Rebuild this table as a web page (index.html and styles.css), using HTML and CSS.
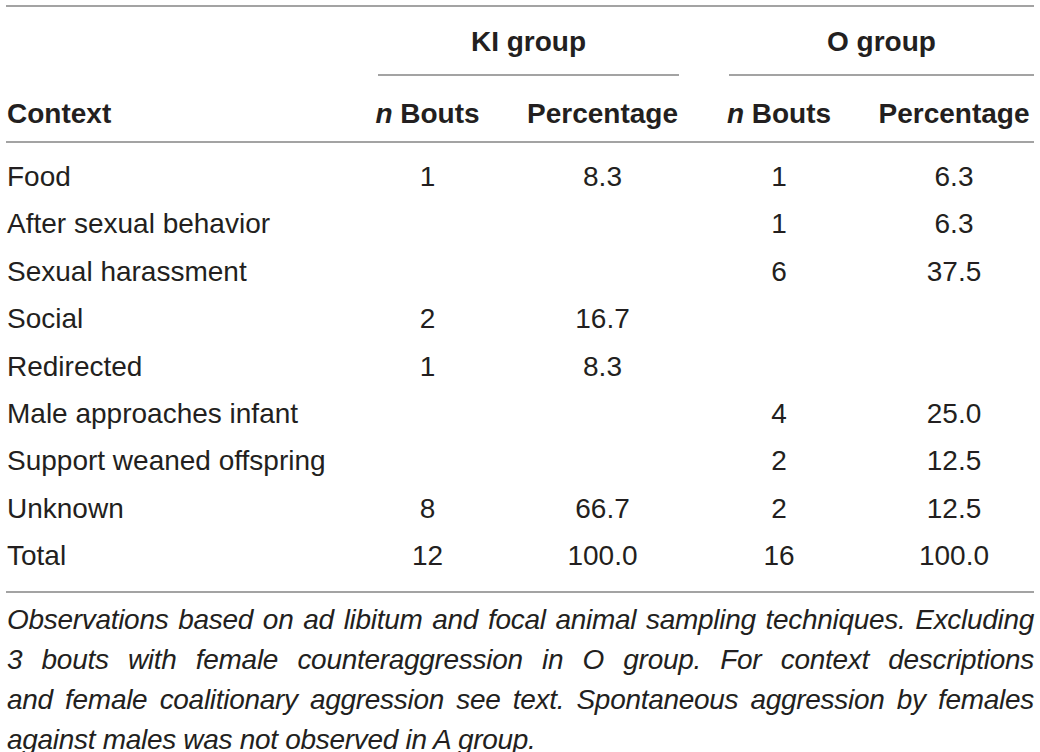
FILE: index.html
```html
<!DOCTYPE html>
<html>
<head>
<meta charset="utf-8">
<link rel="stylesheet" href="styles.css">
</head>
<body>
<div class="wrap">
<table class="data">
  <colgroup>
    <col class="c1"><col class="c2"><col class="c3"><col class="c4"><col class="c5">
  </colgroup>
  <thead>
    <tr class="grp">
      <th></th>
      <th colspan="2"><div class="gline ki">KI group</div></th>
      <th colspan="2"><div class="gline og">O group</div></th>
    </tr>
    <tr class="sub">
      <th class="ctx">Context</th>
      <th><i>n</i> Bouts</th>
      <th>Percentage</th>
      <th><i>n</i> Bouts</th>
      <th class="last">Percentage</th>
    </tr>
  </thead>
  <tbody>
    <tr class="first"><td>Food</td><td>1</td><td>8.3</td><td>1</td><td class="last">6.3</td></tr>
    <tr><td>After sexual behavior</td><td></td><td></td><td>1</td><td class="last">6.3</td></tr>
    <tr><td>Sexual harassment</td><td></td><td></td><td>6</td><td class="last">37.5</td></tr>
    <tr><td>Social</td><td>2</td><td>16.7</td><td></td><td class="last"></td></tr>
    <tr><td>Redirected</td><td>1</td><td>8.3</td><td></td><td class="last"></td></tr>
    <tr><td>Male approaches infant</td><td></td><td></td><td>4</td><td class="last">25.0</td></tr>
    <tr><td>Support weaned offspring</td><td></td><td></td><td>2</td><td class="last">12.5</td></tr>
    <tr><td>Unknown</td><td>8</td><td>66.7</td><td>2</td><td class="last">12.5</td></tr>
    <tr class="end"><td>Total</td><td>12</td><td>100.0</td><td>16</td><td class="last">100.0</td></tr>
  </tbody>
</table>
<div class="note">
  <span class="ln">Observations based on ad libitum and focal animal sampling techniques. Excluding</span>
  <span class="ln">3 bouts with female counteraggression in O group. For context descriptions</span>
  <span class="ln">and female coalitionary aggression see text. Spontaneous aggression by females</span>
  <span class="ln lastln">against males was not observed in A group.</span>
</div>
</div>
</body>
</html>
```

FILE: styles.css
```css
html, body {
  margin: 0;
  padding: 0;
  background: #ffffff;
}
body {
  font-family: "Liberation Sans", Arial, sans-serif;
  font-size: 28px;
  color: #231f20;
}
.wrap {
  padding: 5px 6px 0 6px;
  width: 1028px;
}
.data {
  width: 1028px;
  table-layout: fixed;
  border-collapse: separate;
  border-spacing: 0;
  border-top: 2px solid #a3a3a3;
}
.c1 { width: 334px; }
.c2 { width: 175px; }
.c3 { width: 175px; }
.c4 { width: 178px; }
.c5 { width: 166px; }

th, td {
  padding: 0;
  text-align: center;
  vertical-align: top;
}
th { font-weight: bold; }

.grp th {
  padding-top: 15px;
  line-height: 40px;
}
.gline {
  padding-bottom: 12px;
  border-bottom: 2px solid #a3a3a3;
}
.gline.ki { margin: 0 11px 0 38px; }
.gline.og { margin: 0 0 0 39px; }

.sub th {
  padding-top: 18px;
  padding-bottom: 7px;
  line-height: 40px;
  border-bottom: 2px solid #a3a3a3;
}
.sub th.ctx { text-align: left; padding-left: 1px; }

td {
  line-height: 47.4px;
  white-space: nowrap;
}
td:first-child { text-align: left; padding-left: 1px; }
.last { padding-left: 6px; }
.first td { padding-top: 10px; }
.end td {
  padding-bottom: 11px;
  border-bottom: 2px solid #a3a3a3;
}

.note {
  margin: 7px 0 0 0;
  font-style: italic;
  line-height: 40px;
  padding-left: 1px;
  letter-spacing: -0.3px;
}
.ln {
  display: block;
  white-space: nowrap;
  text-align: justify;
  text-align-last: justify;
}
.ln.lastln {
  text-align: left;
  text-align-last: left;
}
```
